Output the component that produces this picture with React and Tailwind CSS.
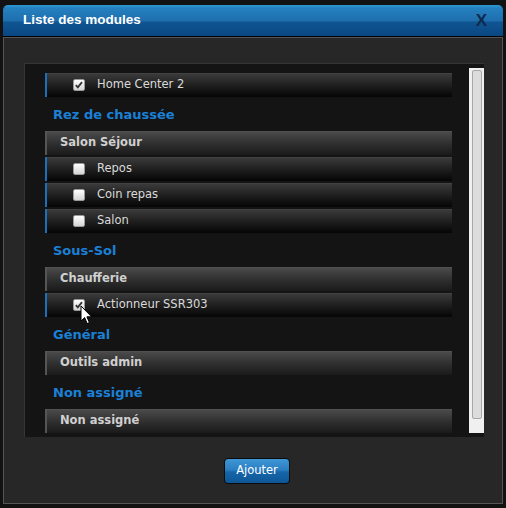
const rowFont = { fontFamily: '"DejaVu Sans", Verdana, sans-serif' };

function Checkbox({ checked }) {
    return (
        <span className="flex size-[12px] items-center justify-center rounded-[2px] border border-[#9a9a9a] bg-[linear-gradient(to_bottom,#ffffff,#d4d4d4)]">
            {checked && (
                <svg viewBox="0 0 12 12" className="size-[10px]">
                    <path d="M2.2 6.2 L4.6 8.8 L9.6 2.6" fill="none" stroke="#333" strokeWidth="2.2" />
                </svg>
            )}
        </span>
    );
}

function Item({ label, checked, children }) {
    return (
        <div className="relative mt-[2px] flex h-[24px] items-center border-l-2 border-[#1c6fbd] bg-[linear-gradient(to_bottom,#4a4a4a_0px,#3a3a3a_1px,#1a1a1a_60%,#050505_100%)] pl-[26px]">
            <Checkbox checked={checked} />
            <span className="ml-[12px] text-[11.5px] text-[#dadada]" style={rowFont}>{label}</span>
            {children}
        </div>
    );
}

function Group({ label }) {
    return (
        <div className="flex h-[24px] items-center border-l-2 border-[#555] bg-[linear-gradient(to_bottom,#585858_0px,#4a4a4a_1px,#2e2e2e_55%,#1a1a1a_100%)] pl-[13px]">
            <span className="text-[11.5px] font-bold text-[#d0d0d0]" style={rowFont}>{label}</span>
        </div>
    );
}

function Heading({ label }) {
    return (
        <h2 className="mt-[10px] mb-[8px] h-[16px] pl-2 text-[13px] leading-[16px] font-bold text-[#1b80d6]" style={rowFont}>
            {label}
        </h2>
    );
}

function Cursor() {
    return (
        <svg className="absolute left-[33px] top-[12px]" width="13" height="20" viewBox="0 0 13 20">
            <path d="M1 1 L1 16 L4.6 12.6 L7.2 18.6 L9.4 17.6 L6.9 11.8 L11.6 11.8 Z" fill="#fff" stroke="#000" strokeWidth="1" strokeLinejoin="round" />
        </svg>
    );
}

export default function App() {
    return (
        <div className="h-[508px] w-[506px] bg-[#121212] pt-[5px] pl-[3px]">
            <div className="w-[500px]">
                <header
                    className="flex h-[32px] items-center justify-between rounded-t-[5px] border-b border-black bg-[linear-gradient(to_bottom,#2c9ad3_0px,#2580bf_3px,#1f6fae_50%,#0f5592_56%,#0a4782_100%)] pr-[16px] pl-[20px]"
                    style={{ fontFamily: '"Liberation Sans", Arial, sans-serif' }}
                >
                    <h1 className="text-[13.5px] font-bold text-white">Liste des modules</h1>
                    <button className="text-[17px] leading-none font-bold text-[#0f2a4c]">X</button>
                </header>
                <div className="h-[467px] border border-[#555] bg-[#272727] pt-[25px] pl-[20px]">
                    <div className="flex h-[374px] w-[460px] overflow-hidden border-t border-l border-[#353535] bg-[#141414]">
                        <div className="w-[427px] pt-[7px] pl-[20px]">
                            <Item label="Home Center 2" checked />
                            <Heading label="Rez de chaussée" />
                            <Group label="Salon Séjour" />
                            <Item label="Repos" />
                            <Item label="Coin repas" />
                            <Item label="Salon" />
                            <Heading label="Sous-Sol" />
                            <Group label="Chaufferie" />
                            <Item label="Actionneur SSR303" checked>
                                <Cursor />
                            </Item>
                            <Heading label="Général" />
                            <Group label="Outils admin" />
                            <Heading label="Non assigné" />
                            <Group label="Non assigné" />
                        </div>
                        <div className="ml-[17px] mt-[4px] mb-[4px] flex w-[15px] justify-center bg-[#f0f0f0] pt-[2px] pb-[14px]">
                            <div className="w-[10px] rounded-[2px] border border-[#a8a8a8] bg-[#dcdcdc]" />
                        </div>
                    </div>
                    <div className="mt-[19px] pl-[200px]">
                        <button
                            className="h-[26px] w-[66px] rounded-[4px] border border-[#0b0b0b] bg-[linear-gradient(to_bottom,#3f97d6_0%,#2a7fc2_45%,#1565a8_55%,#0e5696_100%)] text-[11.5px] text-white"
                            style={rowFont}
                        >
                            Ajouter
                        </button>
                    </div>
                </div>
            </div>
        </div>
    );
}
